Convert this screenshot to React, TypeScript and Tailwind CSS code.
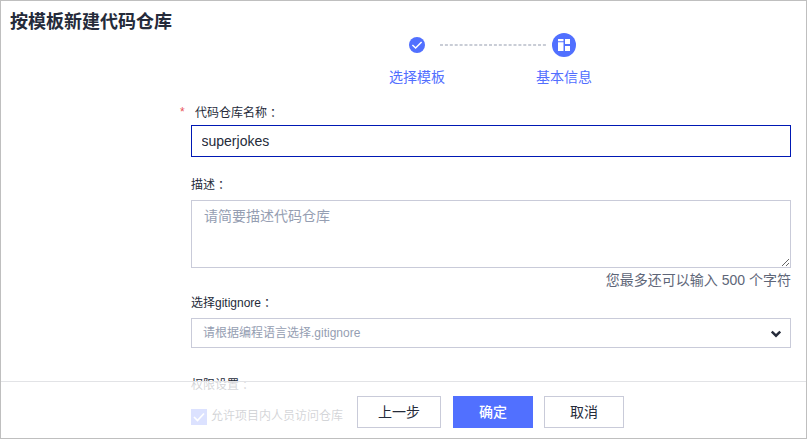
import React from "react";

function Colon() {
  return (
    <span className="relative top-px font-['Noto_Sans_CJK_TC',sans-serif]">：</span>
  );
}

function Steps() {
  return (
    <div className="ml-[388px] flex h-[56px] w-[205px] flex-col">
      <div className="flex h-6 items-center pl-[20px]">
        <svg className="h-4 w-4" viewBox="0 0 16 16">
          <circle cx="8" cy="8" r="8" fill="#5170ff" />
          <path d="M3.4 8 6.6 11 12.6 5" fill="none" stroke="#fff" strokeWidth="1.5" />
        </svg>
        <svg className="ml-[15px] h-[2px] w-[107px]" viewBox="0 0 107 2">
          <path d="M0 1H107" stroke="#c9cdd6" strokeWidth="2" strokeDasharray="3 1.9" />
        </svg>
        <svg className="ml-[5px] h-6 w-6" viewBox="0 0 24 24">
          <circle cx="12" cy="12" r="12" fill="#5170ff" />
          <path
            d="M6 6h5.5v2.3H6zM6 9.3h5.5V18H6zM13 6h5v5h-5zM13 13h5v5h-5z"
            fill="#fff"
          />
        </svg>
      </div>
      <div className="mt-[10px] flex justify-between pr-[2px] text-sm leading-5 text-[#526eff]">
        <span className="whitespace-nowrap">选择模板</span>
        <span className="whitespace-nowrap">基本信息</span>
      </div>
    </div>
  );
}

export default function App() {
  return (
    <div className="relative h-[439px] w-[807px] overflow-hidden border border-[#bfbfbf] bg-white font-['Liberation_Sans','Noto_Sans_CJK_SC',sans-serif] text-[#252b3a]">
      <h1 className="h-8 pl-[9px] pt-[7px] text-lg font-bold leading-7">按模板新建代码仓库</h1>
      <Steps />
      <form className="ml-[190px] flex w-[600px] flex-col text-xs">
        <label className="mt-[14px] flex h-[18px] items-center leading-[18px]">
          <span className="-ml-[11px] w-[15px] text-[#e8545a]">*</span>
          <span>
            代码仓库名称
            <Colon />
          </span>
        </label>
        <input
          className="mt-[4px] h-8 border border-[#0018b4] px-[9.5px] text-sm outline-none"
          defaultValue="superjokes"
        />
        <label className="mt-[18px] h-[18px] leading-[18px]">
          描述
          <Colon />
        </label>
        <textarea
          className="mt-[7px] block h-[68px] resize border border-[#c9cbd9] px-3 py-[5px] text-sm leading-5 outline-none placeholder:text-[#959eb2]"
          placeholder="请简要描述代码仓库"
        />
        <p className="mt-[2px] text-right text-sm leading-5 text-[#5e6678]">
          您最多还可以输入 500 个字符
        </p>
        <label className="mt-[3px] h-[18px] leading-[18px]">
          选择gitignore
          <Colon />
        </label>
        <div className="mt-[7px] flex h-[30px] items-center justify-between border border-[#c9cbd9] pl-[11px] pr-[9px] text-[#959eb2]">
          <span>请根据编程语言选择.gitignore</span>
          <svg className="mt-[2px] h-[8px] w-[10px]" viewBox="0 0 10 8">
            <path d="M.8 1.5 5 5.7 9.2 1.5" fill="none" stroke="#252b3a" strokeWidth="2.4" />
          </svg>
        </div>
        <label className="mt-[27px] h-[18px] leading-[18px]">
          权限设置
          <Colon />
        </label>
        <div className="mt-[16px] flex h-4 items-center">
          <svg className="h-4 w-4" viewBox="0 0 16 16">
            <path d="M0 0h16v16H0z" fill="#5170ff" />
            <path d="M3 8l3.5 3.5L13 4.5" fill="none" stroke="#fff" strokeWidth="1.7" />
          </svg>
          <span className="-mt-[2px] ml-1 leading-4">允许项目内人员访问仓库</span>
        </div>
      </form>
      <footer className="absolute inset-x-0 bottom-0 flex h-[57px] border-t border-[#e2e3e6] bg-white/80 pl-[356px] pt-[14px] text-sm">
        <button className="h-8 w-[84px] border border-[#c9cbd9] bg-white">上一步</button>
        <button className="ml-3 h-8 w-20 bg-[#5170ff] font-medium text-white">确定</button>
        <button className="ml-[11px] h-8 w-20 border border-[#c9cbd9] bg-white">取消</button>
      </footer>
    </div>
  );
}
